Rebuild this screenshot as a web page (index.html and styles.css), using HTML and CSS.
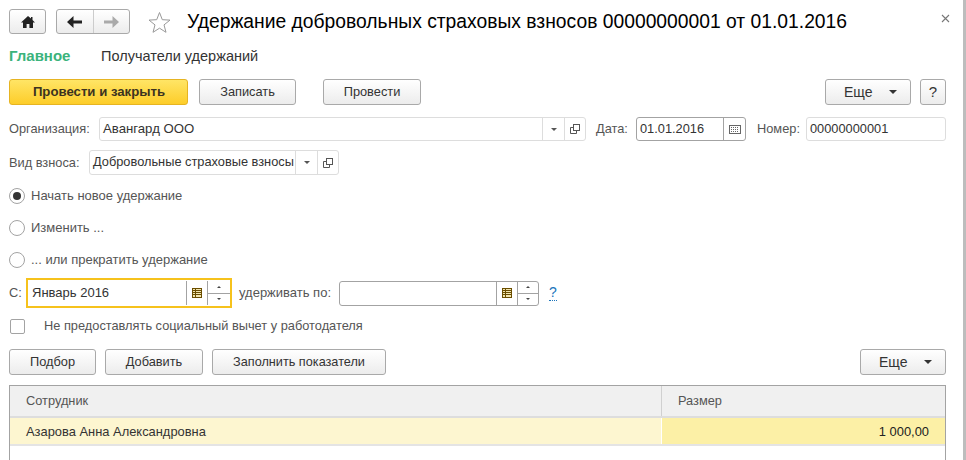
FILE: index.html
```html
<!DOCTYPE html>
<html lang="ru">
<head>
<meta charset="utf-8">
<title>Удержание</title>
<link rel="stylesheet" href="styles.css">
</head>
<body>
<div class="form">
  <header class="titlebar">
    <button class="btn nav home"><svg width="14" height="12" viewBox="0 0 14 12"><path d="M7 0 0 6.5h2V12h3.6V8h2.8v4H12V6.5h2L11.5 4V1H10v1.5z" fill="#222"/></svg></button>
    <div class="btn navgroup">
      <span class="navpart"><svg width="15" height="12" viewBox="0 0 15 12"><path d="M6.5 0v4.500H15v3H6.500V12L0 6z" fill="#222"/></svg></span>
      <span class="navpart"><svg width="15" height="12" viewBox="0 0 15 12"><path d="M8.500 0v4.500H0v3h8.500V12L15 6z" fill="#aaa"/></svg></span>
    </div>
    <svg class="star" width="23" height="22" viewBox="0 0 23 22"><path d="M11.500 1.500 14.300 8.700 22 9.100 16 13.900 18 21.300 11.500 17.200 5 21.300 7 13.900 1 9.100 8.700 8.700z" fill="none" stroke="#999"/></svg>
    <h1 class="title">Удержание добровольных страховых взносов 00000000001 от 01.01.2016</h1>
    <svg class="close" width="9" height="9" viewBox="0 0 9 9"><path d="M1 1l7 7M8 1 1 8" stroke="#777" stroke-width="1.100"/></svg>
  </header>

  <nav class="tabs">
    <span class="tab active">Главное</span>
    <span class="tab">Получатели удержаний</span>
  </nav>

  <div class="toolbar">
    <button class="btn primary">Провести и закрыть</button>
    <button class="btn w-save">Записать</button>
    <button class="btn w-post">Провести</button>
    <span class="spacer"></span>
    <button class="btn more">Еще<i class="caret"></i></button>
    <button class="btn help">?</button>
  </div>

  <div class="row r-org">
    <label class="lbl l-org">Организация:</label>
    <div class="field f-org"><span class="val big">Авангард ООО</span><span class="cell c22"><i class="caret small"></i></span><span class="cell c20"><svg width="10" height="10" viewBox="0 0 10 10"><use href="#open"/></svg></span></div>
    <label class="lbl l-date">Дата:</label>
    <div class="field strong f-date"><span class="val">01.01.2016</span><span class="cell c22"><svg width="12" height="9" viewBox="0 0 12 9"><rect x=".5" y=".5" width="11" height="8" fill="#fff" stroke="#666"/><path d="M2 2.500h8M2 4.500h8M2 6.500h8" stroke="#666" stroke-dasharray="1 1"/></svg></span></div>
    <label class="lbl l-num">Номер:</label>
    <div class="field f-num"><span class="val">00000000001</span></div>
  </div>

  <div class="row r-kind">
    <label class="lbl l-kind">Вид взноса:</label>
    <div class="field f-kind"><span class="val">Добровольные страховые взносы</span><span class="cell c22"><i class="caret small"></i></span><span class="cell c20"><svg width="10" height="10" viewBox="0 0 10 10"><use href="#open"/></svg></span></div>
  </div>

  <div class="radios">
    <div class="radio on"><i class="dot"></i><span>Начать новое удержание</span></div>
    <div class="radio"><i class="dot"></i><span>Изменить ...</span></div>
    <div class="radio"><i class="dot"></i><span>... или прекратить удержание</span></div>
  </div>

  <div class="row r-period">
    <label class="lbl l-from">С:</label>
    <div class="field focus f-from"><span class="val">Январь 2016</span><span class="cell c21"><svg width="10" height="10" viewBox="0 0 10 10"><use href="#grid"/></svg></span><span class="cell c23 spin"><i class="up"></i><i class="down"></i></span></div>
    <label class="lbl l-to">удерживать по:</label>
    <div class="field strong f-to"><span class="val"></span><span class="cell c21"><svg width="10" height="10" viewBox="0 0 10 10"><use href="#grid"/></svg></span><span class="cell c21 spin"><i class="up"></i><i class="down"></i></span></div>
    <a class="hint">?</a>
  </div>

  <div class="check"><i class="box"></i><span>Не предоставлять социальный вычет у работодателя</span></div>

  <div class="toolbar t2">
    <button class="btn w-pick">Подбор</button>
    <button class="btn w-add">Добавить</button>
    <button class="btn w-fill">Заполнить показатели</button>
    <span class="spacer"></span>
    <button class="btn more">Еще<i class="caret"></i></button>
  </div>

  <div class="table">
    <div class="thead"><div class="c1">Сотрудник</div><div class="c2">Размер</div></div>
    <div class="tr"><div class="c1">Азарова Анна Александровна</div><div class="c2 num">1 000,00</div></div>
  </div>
</div>

<svg class="defs" width="0" height="0">
  <defs>
    <g id="open" fill="none" stroke="#555"><rect x="3.500" y=".5" width="6" height="6"/><path d="M3.500 3.500H.5v6h6V6.500"/></g>
    <g id="grid"><rect x=".5" y=".5" width="9" height="9" fill="#f3e6b0" stroke="#6b4e00"/><path d="M.5 2.500h9M.5 4.500h9M.5 6.500h9M3.500 .5v9" stroke="#6b4e00"/></g>
  </defs>
</svg>
</body>
</html>
```
FILE: styles.css
```css
* { box-sizing: border-box; }
html, body { margin: 0; padding: 0; }
body { width: 966px; height: 460px; overflow: hidden; background: #fff; font: 12.8px/16px "Liberation Sans", Arial, sans-serif; color: #333; }
.form { width: 966px; height: 460px; padding: 9px 17px 0 9px; border-right: 3px solid #bdbdbd; overflow: hidden; position: relative; }
.defs { position: absolute; }

.titlebar { display: flex; align-items: center; height: 25px; }
.btn { height: 26px; padding: 0; border: 1px solid #a9a9a9; border-radius: 3px; background: linear-gradient(#fff, #ececec); font: inherit; color: #333; display: inline-flex; align-items: center; justify-content: center; }
.nav { width: 37px; height: 25px; }
.navgroup { width: 74px; height: 25px; margin-left: 10px; }
.navpart { flex: 1; height: 100%; display: flex; align-items: center; justify-content: center; }
.navpart + .navpart { border-left: 1px solid #ccc; }
.star { margin-left: 18px; flex: none; }
.title { margin: 0 0 0 16px; font-size: 19.300px; line-height: 25px; font-weight: 400; color: #000; white-space: nowrap; }
.close { position: absolute; left: 941px; top: 14px; }

.tabs { display: flex; margin-top: 14px; height: 16px; font-size: 14.500px; }
.tab { width: 92px; white-space: nowrap; }
.tab.active { color: #3bb37c; font-weight: 700; font-size: 15px; }

.toolbar { display: flex; margin-top: 15px; gap: 11px; height: 26px; }
.primary { width: 179px; padding-left: 1px; border-color: #e6b422; background: linear-gradient(#ffe566, #fdcd2a); font-weight: 700; font-size: 13.200px; color: #3c3320; }
.w-save { width: 97px; }
.w-post { width: 98px; margin-left: 16px; }
.spacer { flex: 1; }
.more { width: 86px; position: relative; justify-content: flex-start; padding-left: 18px; font-size: 14px; }
.help { width: 26px; margin-left: -2px; font-size: 15px; }
.caret { position: absolute; right: 13px; top: 10px; width: 0; height: 0; border: 4px solid transparent; border-top: 4px solid #333; border-bottom: 0; }
.caret.small { position: static; border-width: 3px; border-top-color: #555; border-bottom: 0; }

.row { display: flex; align-items: center; }
.r-org { margin-top: 12px; height: 24px; }
.r-kind { margin-top: 9px; height: 25px; }
.lbl { white-space: nowrap; color: #555; }
.field { display: flex; height: 100%; border: 1px solid #ddd; border-radius: 3px; background: #fff; flex: none; }
.field.strong { border-color: #a3a3a3; }
.val { flex: 1; min-width: 0; padding: 0 0 0 3px; line-height: 22px; white-space: nowrap; overflow: hidden; color: #333; }
.val.big { font-size: 13.200px; }
.cell { flex: none; display: flex; align-items: center; justify-content: center; border-left: 1px solid #ddd; }
.strong .cell { border-left-color: #a3a3a3; }
.c22 { width: 22px; }
.c20 { width: 21px; }
.c21 { width: 21px; }
.c23 { width: 23px; }
.l-org { width: 90px; }
.f-org { width: 487px; }
.l-date { margin-left: 10px; width: 40px; }
.f-date { width: 110px; }
.l-num { margin-left: 11px; width: 49px; }
.f-num { width: 140px; }
.l-kind { width: 80px; }
.f-kind { width: 250px; }

.radios { margin-top: 5px; }
.radio { display: flex; align-items: center; height: 32px; gap: 6px; color: #555; font-size: 13px; }
.dot { width: 16px; height: 16px; border: 1px solid #a3a3a3; border-radius: 50%; background: #fff; display: flex; align-items: center; justify-content: center; flex: none; }
.radio.on .dot::after { content: ""; width: 8px; height: 8px; border-radius: 50%; background: #333; }

.r-period { margin-top: 2px; height: 30px; }
.l-from { width: 17px; }
.f-from { width: 206px; }
.focus { border: 2px solid #f6c21c; border-radius: 0; }
.focus .cell { border-left-color: #a3a3a3; margin: 1px 0; }
.focus .val { padding-left: 4px; line-height: 26px; font-size: 13px; }
.l-to { margin-left: 7px; width: 100px; font-size: 13px; }
.f-to { width: 200px; height: 25px; }
.spin { flex-direction: column; position: relative; }
.spin .up, .spin .down { flex: 1; width: 100%; display: flex; align-items: center; justify-content: center; }
.spin .down { border-top: 1px solid #a3a3a3; }
.spin .up::after, .spin .down::after { content: ""; width: 0; height: 0; border: 2px solid transparent; }
.spin .up::after { border-bottom-color: #444; border-top: 0; }
.spin .down::after { border-top-color: #444; border-bottom: 0; }
.hint { margin-left: 10px; color: #1b75bb; font-size: 14px; border-bottom: 1px dotted #1b75bb; line-height: 15px; }

.check { display: flex; align-items: center; height: 16px; margin-top: 10px; padding-left: 1px; color: #555; gap: 19px; }
.box { width: 15px; height: 15px; border: 1px solid #a3a3a3; border-radius: 2px; flex: none; }

.t2 { margin-top: 15px; gap: 9px; }
.w-pick { width: 87px; }
.w-add { width: 98px; }
.w-fill { width: 174px; font-size: 12.700px; }

.table { margin-top: 10px; width: 937px; height: 80px; border: 1px solid #a3a3a3; border-bottom: 0; }
.thead, .tr { display: flex; }
.thead { height: 32px; background: #f0f0f0; border-bottom: 2px solid #ddd; color: #555; }
.tr { height: 28px; border-bottom: 2px solid #e4e4e4; color: #333; font-size: 12.900px; }
.thead .c1, .thead .c2 { line-height: 29px; }
.tr .c1, .tr .c2 { line-height: 27px; }
.c1 { width: 652px; padding-left: 16px; border-right: 1px solid #d0d0d0; }
.c2 { flex: 1; padding-left: 16px; }
.tr .c1 { background: #fdf6d0; border-right-color: #fff; }
.tr .c2 { background: #fcf0a6; }
.num { text-align: right; padding: 0 16px 0 0; color: #222; }
```
